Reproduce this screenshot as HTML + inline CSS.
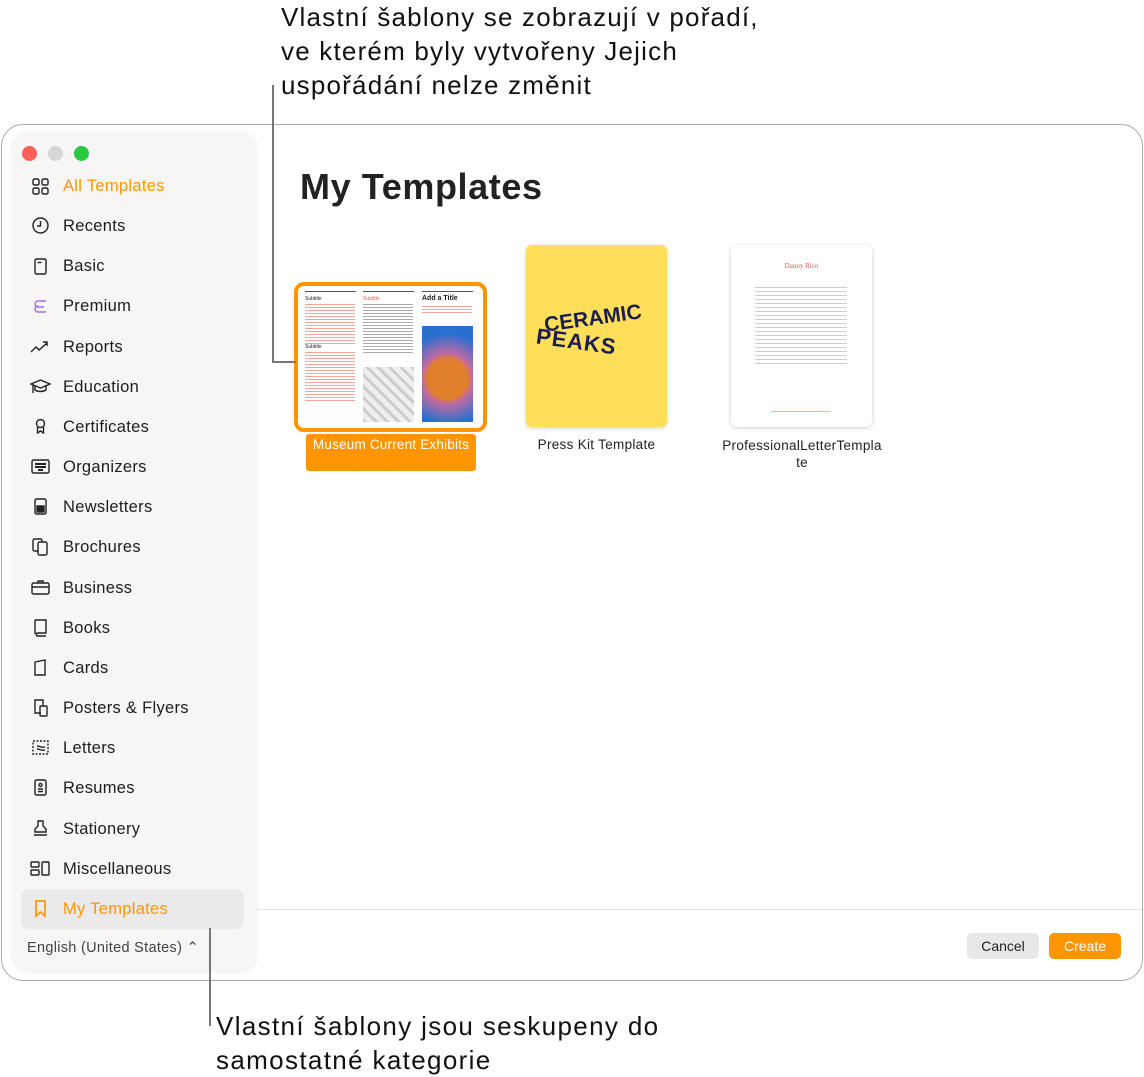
<!DOCTYPE html>
<html><head><meta charset="utf-8"><style>
*{margin:0;padding:0;box-sizing:border-box}
body{width:1144px;height:1077px;background:#fff;position:relative;font-family:"Liberation Sans",sans-serif;overflow:hidden;color:#1d1d1f}
.call{position:absolute;font-size:26px;line-height:34px;color:#111;letter-spacing:1.2px;white-space:nowrap}
.win{position:absolute;left:1px;top:124px;width:1142px;height:857px;border:1px solid #a9a9a9;border-radius:22px;background:#fff}
.side{position:absolute;left:13px;top:133px;width:243px;height:839px;background:#f7f6f5;border-radius:16px;box-shadow:0 0 6px rgba(0,0,0,.08)}
.dot{position:absolute;top:146px;width:15px;height:15px;border-radius:50%}
.item{position:absolute;left:63px;font-size:16.5px;height:22px;line-height:22px;letter-spacing:0.3px}
.ic{position:absolute;left:30px;width:21px;height:21px}
.ic svg{width:21px;height:21px;fill:none;stroke:#222;stroke-width:1.4}
.sel{position:absolute;left:21px;top:889px;width:223px;height:40px;background:#ebeaea;border-radius:8px}
.line{position:absolute;background:#777}
.cap{position:absolute;font-size:13.5px;text-align:center;color:#222;letter-spacing:0.3px}
</style></head><body>
<div class="call" style="left:281px;top:0px">Vlastní šablony se zobrazují v pořadí,<br>ve kterém byly vytvořeny Jejich<br>uspořádání nelze změnit</div>
<div class="call" style="left:216px;top:1009px;letter-spacing:1.35px">Vlastní šablony jsou seskupeny do<br>samostatné kategorie</div>
<div class="win"></div>
<div class="side"></div>
<div class="dot" style="left:22px;background:#fe5f57"></div>
<div class="dot" style="left:48px;background:#d6d6d6"></div>
<div class="dot" style="left:74px;background:#28c840"></div>
<div class="sel"></div>

<div class="item" style="top:175px;color:#ff9500">All Templates</div>
<div class="item" style="top:215px">Recents</div>
<div class="item" style="top:255px">Basic</div>
<div class="item" style="top:295px">Premium</div>
<div class="item" style="top:336px">Reports</div>
<div class="item" style="top:376px">Education</div>
<div class="item" style="top:416px">Certificates</div>
<div class="item" style="top:456px">Organizers</div>
<div class="item" style="top:496px">Newsletters</div>
<div class="item" style="top:536px">Brochures</div>
<div class="item" style="top:577px">Business</div>
<div class="item" style="top:617px">Books</div>
<div class="item" style="top:657px">Cards</div>
<div class="item" style="top:697px">Posters &amp; Flyers</div>
<div class="item" style="top:737px">Letters</div>
<div class="item" style="top:777px">Resumes</div>
<div class="item" style="top:818px">Stationery</div>
<div class="item" style="top:858px">Miscellaneous</div>
<div class="item" style="top:898px;color:#ff9500">My Templates</div>
<div style="position:absolute;left:27px;top:940px;font-size:14.5px;color:#444;letter-spacing:0.3px">English (United States) ⌃</div>

<div class="ic" style="top:176px"><svg viewBox="0 0 21 21"><rect x="3" y="3" width="6" height="6" rx="1.5"/><rect x="12" y="3" width="6" height="6" rx="1.5"/><rect x="3" y="12" width="6" height="6" rx="1.5"/><rect x="12" y="12" width="6" height="6" rx="1.5"/></svg></div>
<div class="ic" style="top:215px"><svg viewBox="0 0 21 21"><circle cx="10.5" cy="10.5" r="7.5"/><path d="M10.5 6v5H7"/></svg></div>
<div class="ic" style="top:256px"><svg viewBox="0 0 21 21"><rect x="5" y="3" width="11" height="15" rx="1.5"/><path d="M7.5 6.5h4"/></svg></div>
<div class="ic" style="top:296px"><svg viewBox="0 0 21 21" style="stroke:#a070e0"><path d="M16 5H8a3 3 0 000 6h6M16 16H8a3 3 0 010-6"/></svg></div>
<div class="ic" style="top:336px"><svg viewBox="0 0 21 21"><path d="M1 16l5-5 3 3 8-7M13 6h4v4"/></svg></div>
<div class="ic" style="top:376px"><svg viewBox="0 0 21 21"><path d="M1 8l9.5-4 9.5 4-9.5 4zM5 10v4c3 2 8 2 11 0v-4M3 9v8"/></svg></div>
<div class="ic" style="top:416px"><svg viewBox="0 0 21 21"><circle cx="10.5" cy="7.5" r="4"/><path d="M7.5 11v6l3-2 3 2v-6"/></svg></div>
<div class="ic" style="top:456px"><svg viewBox="0 0 21 21"><rect x="2" y="4" width="17" height="13" rx="1.5"/><path d="M5 8h11M5 11h11M8 14h5" stroke-width="2"/></svg></div>
<div class="ic" style="top:496px"><svg viewBox="0 0 21 21"><rect x="5" y="3" width="11" height="15" rx="1.5"/><rect x="7" y="10" width="7" height="6" fill="#222"/></svg></div>
<div class="ic" style="top:536px"><svg viewBox="0 0 21 21"><rect x="3" y="3" width="9" height="12" rx="1.5"/><rect x="8" y="6" width="9" height="13" rx="1.5" fill="#f7f6f5"/></svg></div>
<div class="ic" style="top:577px"><svg viewBox="0 0 21 21"><rect x="2" y="6" width="17" height="11" rx="1.5"/><path d="M8 6V4h5v2M2 10h17"/></svg></div>
<div class="ic" style="top:617px"><svg viewBox="0 0 21 21"><path d="M5 3h11v13H7a2 2 0 000 3h9M5 3v14"/></svg></div>
<div class="ic" style="top:657px"><svg viewBox="0 0 21 21"><path d="M5 5l10-2v15H5z"/></svg></div>
<div class="ic" style="top:697px"><svg viewBox="0 0 21 21"><path d="M11 16H5V3h8v6"/><rect x="10" y="9" width="7" height="10" rx="1"/></svg></div>
<div class="ic" style="top:737px"><svg viewBox="0 0 21 21" stroke-dasharray="2 1.5"><rect x="3" y="4" width="15" height="13"/><path d="M7 9c3 0 4 2 8 1M7 12c3 0 4 2 8 1" stroke-dasharray="none"/></svg></div>
<div class="ic" style="top:777px"><svg viewBox="0 0 21 21"><rect x="5" y="3" width="11" height="15" rx="1.5"/><circle cx="10.5" cy="8" r="1.5"/><path d="M8 12h5M8 14.5h5"/></svg></div>
<div class="ic" style="top:818px"><svg viewBox="0 0 21 21"><path d="M8 3h5v5l3 3v3H5v-3l3-3zM4 17h13"/></svg></div>
<div class="ic" style="top:858px"><svg viewBox="0 0 21 21"><rect x="1" y="4" width="8" height="5" rx="1"/><rect x="1" y="12" width="8" height="5" rx="1"/><rect x="12" y="4" width="7" height="13" rx="1"/></svg></div>
<div class="ic" style="top:898px"><svg viewBox="0 0 21 21" style="stroke:#ff9500;stroke-width:1.7"><path d="M6 3h9v15l-4.5-4L6 18z"/></svg></div>

<div style="position:absolute;left:300px;top:166px;font-size:36px;font-weight:bold;color:#222;letter-spacing:0.6px">My Templates</div>

<!-- template 1 -->
<div style="position:absolute;left:294px;top:282px;width:193px;height:150px;border:4px solid #ff9500;border-radius:10px;background:#fff;overflow:hidden">
 <div style="position:absolute;left:7px;top:5px;width:51px;height:1px;background:#555"></div>
 <div style="position:absolute;left:65px;top:5px;width:51px;height:1px;background:#555"></div>
 <div style="position:absolute;left:124px;top:5px;width:51px;height:1px;background:#555"></div>
 <div style="position:absolute;left:7px;top:10px;font-size:5px">Subtitle</div>
 <div style="position:absolute;left:7px;top:18px;width:50px;height:40px;background:repeating-linear-gradient(#f7a59a 0 1px,#fff 1px 3px)"></div>
 <div style="position:absolute;left:7px;top:58px;font-size:5px">Subtitle</div>
 <div style="position:absolute;left:7px;top:66px;width:50px;height:50px;background:repeating-linear-gradient(#f7a59a 0 1px,#fff 1px 3px)"></div>
 <div style="position:absolute;left:65px;top:10px;font-size:5px;color:#f55">Subtitle</div>
 <div style="position:absolute;left:65px;top:18px;width:50px;height:50px;background:repeating-linear-gradient(#aaa 0 1px,#fff 1px 3px)"></div>
 <div style="position:absolute;left:65px;top:81px;width:51px;height:55px;background:repeating-linear-gradient(45deg,#ccc 0 3px,#eee 3px 8px)"></div>
 <div style="position:absolute;left:124px;top:9px;font-size:7px;font-weight:bold">Add a Title</div>
 <div style="position:absolute;left:124px;top:20px;width:50px;height:8px;background:repeating-linear-gradient(#f7a59a 0 1px,#fff 1px 3px)"></div>
 <div style="position:absolute;left:124px;top:40px;width:51px;height:96px;background:radial-gradient(circle at 50% 55%,#e0802a 0 20px,#c26aa0 25px,#2a6fd0 45px)"></div>
</div>
<div style="position:absolute;left:306px;top:434px;width:170px;height:37px;background:#ff9500;border-radius:3px;color:#fff;font-size:13.5px;text-align:center;padding-top:3px;letter-spacing:0.2px">Museum Current Exhibits</div>

<!-- template 2 -->
<div style="position:absolute;left:526px;top:245px;width:141px;height:182px;background:#ffde59;border-radius:6px;box-shadow:0 1px 4px rgba(0,0,0,.2);overflow:hidden">
 <div style="position:absolute;left:18px;top:62px;font-size:21px;font-weight:bold;color:#1c1e4f;transform:rotate(-8deg);letter-spacing:0px">CERAMIC</div>
 <div style="position:absolute;left:10px;top:84px;font-size:22px;font-weight:bold;color:#1c1e4f;transform:rotate(8deg);letter-spacing:1px">PEAKS</div>
</div>
<div class="cap" style="left:526px;top:437px;width:141px">Press Kit Template</div>

<!-- template 3 -->
<div style="position:absolute;left:731px;top:245px;width:141px;height:182px;background:#fff;border-radius:6px;box-shadow:0 1px 4px rgba(0,0,0,.2)">
 <div style="position:absolute;left:0;top:17px;width:141px;text-align:center;font-family:'Liberation Serif',serif;font-size:7px;color:#e0554a">Danny Rico</div>
 <div style="position:absolute;left:24px;top:42px;width:92px;height:80px;background:repeating-linear-gradient(#ccc 0 1px,#fff 1px 4px)"></div>
 <div style="position:absolute;left:40px;top:166px;width:60px;height:1px;background:#f5b0a8"></div>
</div>
<div class="cap" style="left:712px;top:437px;width:180px;line-height:17px">ProfessionalLetterTempla<br>te</div>

<div style="position:absolute;left:256px;top:909px;width:886px;height:1px;background:#e2e2e2"></div>
<div style="position:absolute;left:967px;top:933px;width:72px;height:26px;background:#e8e8e8;border-radius:5px;font-size:14px;text-align:center;line-height:26px;color:#222">Cancel</div>
<div style="position:absolute;left:1049px;top:933px;width:72px;height:26px;background:#ff9500;border-radius:5px;font-size:14px;text-align:center;line-height:26px;color:#fff">Create</div>

<div class="line" style="left:272px;top:85px;width:2px;height:278px"></div>
<div class="line" style="left:272px;top:361px;width:24px;height:2px"></div>
<div class="line" style="left:209px;top:928px;width:2px;height:98px"></div>
</body></html>
